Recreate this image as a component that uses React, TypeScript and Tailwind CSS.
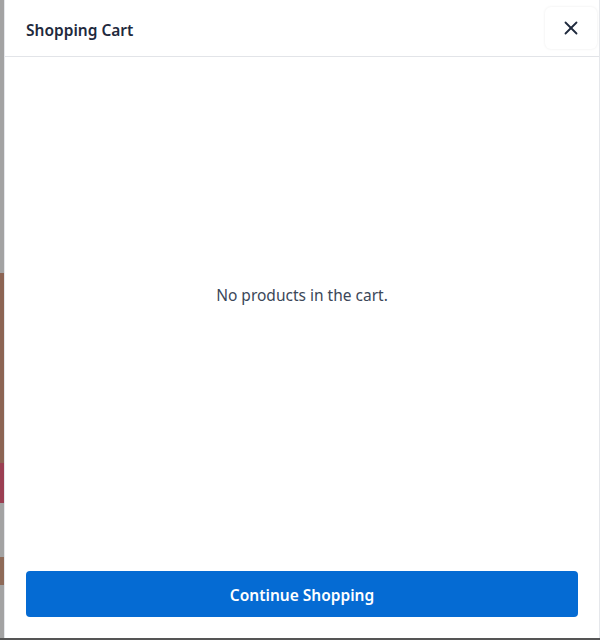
import { X } from "lucide-react";

export default function App() {
  return (
    <div
      className="flex h-[640px] w-[600px] flex-col overflow-hidden bg-white"
      style={{ fontFamily: '"Noto Sans", "Open Sans", sans-serif' }}
    >
      <div className="flex min-h-0 flex-1">
        {/* page behind the drawer */}
        <div className="flex w-[4px] flex-col">
          <div className="h-[273px] bg-[#a3a3a3]" />
          <div className="h-[190px] bg-[#8c6453]" />
          <div className="h-[40px] bg-[#9b3f52]" />
          <div className="h-[54px] bg-[#a3a3a3]" />
          <div className="h-[28px] bg-[#8e6a58]" />
          <div className="flex-1 bg-[#a3a3a3]" />
        </div>

        <aside className="flex flex-1 flex-col border-l border-r border-[#e5e7eb] bg-white">
          <header className="flex h-[57px] items-center justify-between border-b border-[#e2e4e8] pl-[21px] pr-[2px]">
            <h2 className="mt-[5px] text-[15.5px] font-semibold text-[#1f2a3d]">Shopping Cart</h2>
            <button className="flex h-[42px] w-[52px] items-center justify-center rounded-md bg-white shadow-[0_0_3px_rgba(0,0,0,0.08)] text-[#1f2a3d]">
              <X className="h-[22px] w-[22px]" strokeWidth={2} />
            </button>
          </header>

          <div className="flex flex-1 items-center justify-center pb-[36px]">
            <p className="text-[15.5px] text-[#3b4759]">No products in the cart.</p>
          </div>

          <div className="px-[21px] pb-[21px]">
            <button className="flex h-[46px] w-full items-center justify-center rounded-[4px] bg-[#056bd3] pt-[3px] text-[15.5px] font-semibold text-white">
              Continue Shopping
            </button>
          </div>
        </aside>
      </div>
      <div className="h-[2px] bg-[#555]" />
    </div>
  );
}
